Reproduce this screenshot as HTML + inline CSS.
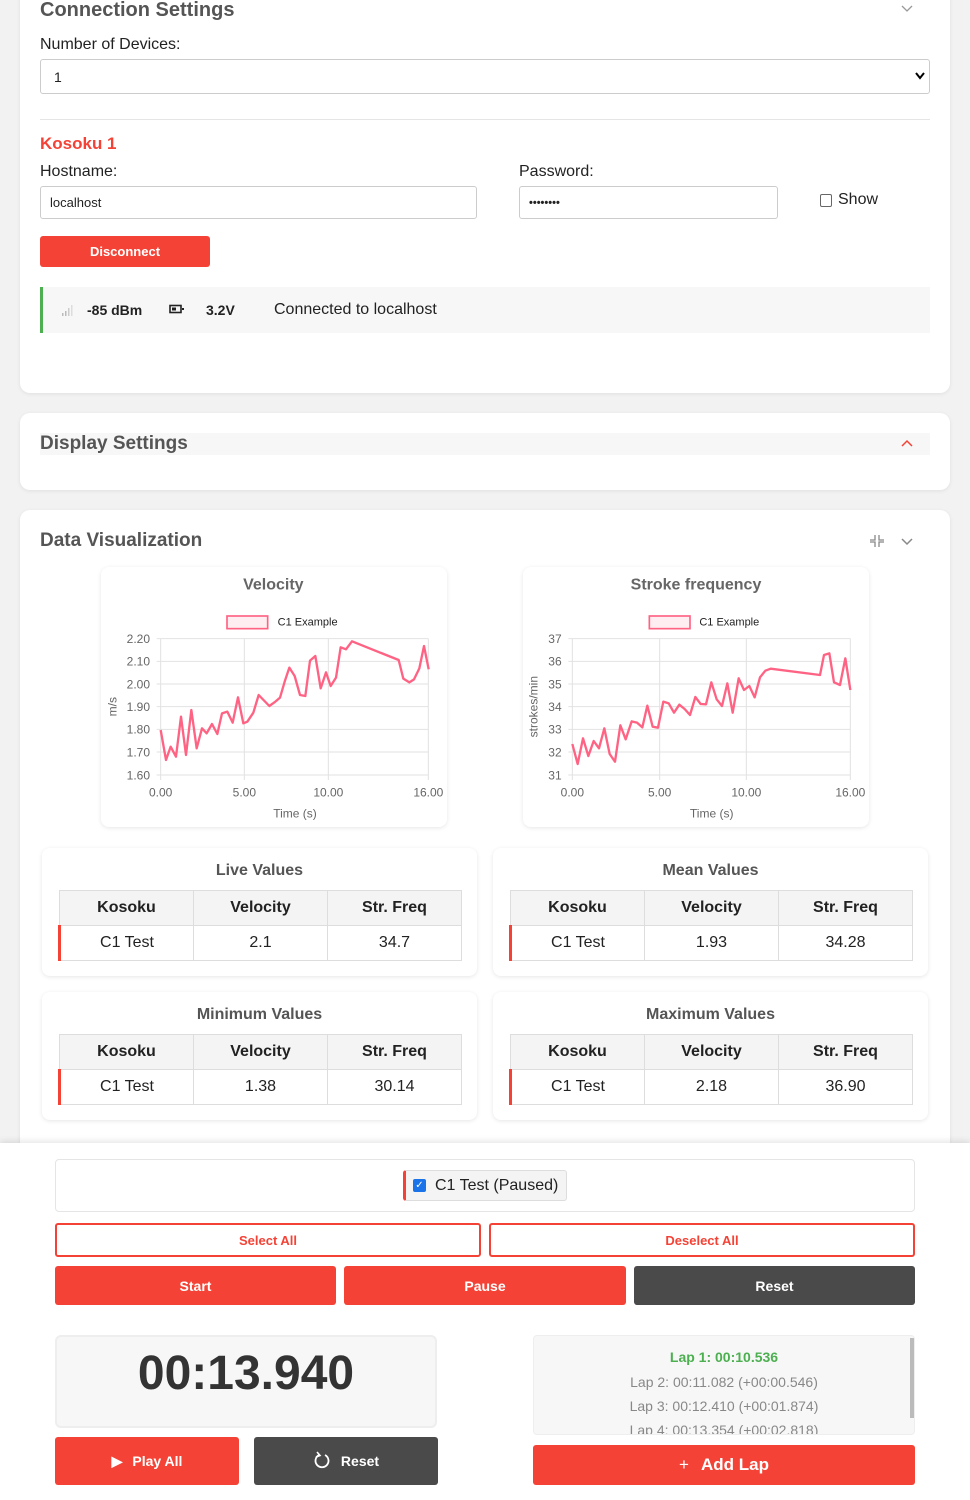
<!DOCTYPE html>
<html><head><meta charset="utf-8"><style>
*{box-sizing:border-box;margin:0;padding:0}
body{width:970px;height:1500px;background:#f2f2f2;font-family:"Liberation Sans",Arial,sans-serif;position:relative;overflow:hidden;color:#222}
.abs{position:absolute}
.card{position:absolute;background:#fff;border-radius:10px;box-shadow:0 1px 4px rgba(0,0,0,.08)}
.h2{position:absolute;font-size:20px;font-weight:bold;color:#555}
.inp{position:absolute;border:1px solid #ccc;border-radius:3px;background:#fff;font-size:13px;padding-left:9px;display:flex;align-items:center}
.btn{position:absolute;border-radius:3px;color:#fff;font-weight:bold;font-size:14px;display:flex;align-items:center;justify-content:center}
.red{background:#f44336}.dark{background:#4a4a4a}
.sub{position:absolute;background:#fff;border-radius:8px;box-shadow:0 1px 4px rgba(0,0,0,.1)}
table{position:absolute;border-collapse:collapse;font-size:16px;table-layout:fixed}
td,th{border:1px solid #ddd;text-align:center;height:35px}
th{background:#f4f4f4;font-weight:bold}
.tt{position:absolute;width:100%;text-align:center;font-weight:bold;font-size:16px;color:#555}
svg text{font-family:"Liberation Sans",Arial,sans-serif}
</style></head><body>

<div class="card" style="left:20px;top:-20px;width:930px;height:413px"></div>
<div class="h2" style="left:40px;top:-1px">Connection Settings</div>
<svg class="abs" style="left:901px;top:4px" width="12" height="10"><path d="M1 2 L6 7 L11 2" stroke="#999" fill="none" stroke-width="1.3"/></svg>
<div class="abs" style="left:40px;top:36px;font-size:16px">Number of Devices:</div>
<div class="inp" style="left:40px;top:59px;width:890px;height:35px;font-size:14px;padding-left:13px">1</div>
<svg class="abs" style="left:915px;top:72px" width="10" height="8"><path d="M1 1 L5 6 L9 1" stroke="#000" fill="none" stroke-width="2"/></svg>
<div class="abs" style="left:40px;top:119px;width:890px;height:1px;background:#e5e5e5"></div>
<div class="abs" style="left:40px;top:134px;font-size:17px;font-weight:bold;color:#f44336">Kosoku 1</div>
<div class="abs" style="left:40px;top:163px;font-size:16px">Hostname:</div>
<div class="abs" style="left:519px;top:163px;font-size:16px">Password:</div>
<div class="inp" style="left:40px;top:186px;width:437px;height:33px">localhost</div>
<div class="inp" style="left:519px;top:186px;width:259px;height:33px;font-size:11px;font-weight:bold">••••••••</div>
<div class="abs" style="left:820px;top:194px;width:12px;height:13px;border:1px solid #666;border-radius:2px"></div>
<div class="abs" style="left:838px;top:191px;font-size:16px">Show</div>
<div class="btn red" style="left:40px;top:236px;width:170px;height:31px;font-size:13px">Disconnect</div>
<div class="abs" style="left:40px;top:287px;width:890px;height:46px;background:#f7f7f7;border-left:3px solid #4caf50"></div>
<svg class="abs" style="left:61px;top:303px" width="14" height="14"><rect x="1" y="10" width="1.5" height="3" fill="#bbb"/><rect x="4" y="8" width="1.5" height="5" fill="#bbb"/><rect x="7" y="5" width="1.5" height="8" fill="#ccc"/><rect x="10" y="2" width="1.5" height="11" fill="#ddd"/></svg>
<div class="abs" style="left:87px;top:302px;font-size:14px;font-weight:bold">-85 dBm</div>
<svg class="abs" style="left:169px;top:304px" width="16" height="10"><rect x="1" y="1.5" width="11" height="7" fill="none" stroke="#222" stroke-width="1.6"/><rect x="3" y="3.5" width="4" height="3" fill="#222"/><rect x="13" y="4" width="2" height="2" fill="#222"/></svg>
<div class="abs" style="left:206px;top:302px;font-size:14px;font-weight:bold">3.2V</div>
<div class="abs" style="left:274px;top:301px;font-size:16px">Connected to localhost</div>

<div class="card" style="left:20px;top:413px;width:930px;height:77px"></div>
<div class="abs" style="left:40px;top:433px;width:890px;height:22px;background:#f7f7f7"></div>
<div class="h2" style="left:40px;top:433px;font-size:19px">Display Settings</div>
<svg class="abs" style="left:901px;top:439px" width="12" height="9"><path d="M1 7 L6 2 L11 7" stroke="#f44336" fill="none" stroke-width="1.5"/></svg>

<div class="card" style="left:20px;top:510px;width:930px;height:660px"></div>
<div class="h2" style="left:40px;top:530px;font-size:19px">Data Visualization</div>
<svg class="abs" style="left:870px;top:535px" width="14" height="12"><path d="M5 0V5H0M9 0V5H14M5 12V7H0M9 12V7H14" stroke="#888" fill="none" stroke-width="1.3"/></svg>
<svg class="abs" style="left:901px;top:537px" width="12" height="9"><path d="M1 2 L6 7 L11 2" stroke="#888" fill="none" stroke-width="1.5"/></svg>

<div class="sub" style="left:101px;top:567px;width:346px;height:260px"></div>
<svg class="abs" style="left:90px;top:560px" width="380" height="270" viewBox="0 0 1140 810">
<text x="550" y="88" font-size="48" font-weight="bold" fill="#666" text-anchor="middle">Velocity</text>
<rect x="411" y="168" width="122" height="38" fill="#ffeef1" stroke="#ff6384" stroke-width="5"/>
<text x="563" y="197" font-size="33" fill="#222" font-family="DejaVu Sans">C1 Example</text>
<g stroke="#e2e2e2" stroke-width="3"><path d="M200 236H1015M200 304H1015M200 372H1015M200 440H1015M200 508H1015M200 576H1015M200 645H1015M212 236V660M463 236V660M715 236V660M1015 236V660"/></g>
<g font-size="36" fill="#666" text-anchor="end"><text x="180" y="249">2.20</text><text x="180" y="317">2.10</text><text x="180" y="385">2.00</text><text x="180" y="453">1.90</text><text x="180" y="521">1.80</text><text x="180" y="589">1.70</text><text x="180" y="658">1.60</text></g>
<g font-size="36" fill="#666" text-anchor="middle"><text x="212" y="710">0.00</text><text x="463" y="710">5.00</text><text x="715" y="710">10.00</text><text x="1015" y="710">16.00</text><text x="615" y="772">Time (s)</text></g>
<text transform="translate(80 440) rotate(-90)" font-size="36" fill="#666" text-anchor="middle">m/s</text>
<polyline fill="none" stroke="#ff6384" stroke-width="7" stroke-linejoin="round" points="212,510 228,600 242,560 258,590 273,470 288,585 304,450 320,565 336,505 350,520 366,492 382,522 396,460 412,455 428,488 444,412 460,490 472,485 490,458 506,405 538,438 556,425 570,413 584,365 598,323 614,348 630,405 646,408 660,302 676,288 692,385 708,337 722,378 738,353 752,262 768,268 786,244 926,300 940,356 958,367 972,358 988,325 1002,258 1016,328"/>
</svg>

<div class="sub" style="left:523px;top:567px;width:346px;height:260px"></div>
<svg class="abs" style="left:510px;top:560px" width="380" height="270" viewBox="0 0 1140 810">
<text x="558" y="88" font-size="48" font-weight="bold" fill="#666" text-anchor="middle">Stroke frequency</text>
<rect x="418" y="168" width="122" height="38" fill="#ffeef1" stroke="#ff6384" stroke-width="5"/>
<text x="568" y="197" font-size="33" fill="#222" font-family="DejaVu Sans">C1 Example</text>
<g stroke="#e2e2e2" stroke-width="3"><path d="M175 236H1021M175 304H1021M175 372H1021M175 440H1021M175 508H1021M175 576H1021M175 645H1021M187 236V660M449 236V660M709 236V660M1021 236V660"/></g>
<g font-size="36" fill="#666" text-anchor="end"><text x="155" y="249">37</text><text x="155" y="317">36</text><text x="155" y="385">35</text><text x="155" y="453">34</text><text x="155" y="521">33</text><text x="155" y="589">32</text><text x="155" y="658">31</text></g>
<g font-size="36" fill="#666" text-anchor="middle"><text x="187" y="710">0.00</text><text x="449" y="710">5.00</text><text x="709" y="710">10.00</text><text x="1021" y="710">16.00</text><text x="605" y="772">Time (s)</text></g>
<text transform="translate(82 440) rotate(-90)" font-size="36" fill="#666" text-anchor="middle">strokes/min</text>
<polyline fill="none" stroke="#ff6384" stroke-width="7" stroke-linejoin="round" points="187,552 203,612 219,535 235,588 251,543 267,565 283,505 299,582 315,605 331,496 347,538 365,484 381,488 397,502 412,437 428,500 444,503 460,425 476,430 492,458 508,434 524,447 540,465 556,411 572,432 588,433 604,367 620,418 636,438 652,370 668,458 686,355 702,390 718,378 734,412 750,352 766,332 782,326 930,345 942,285 958,280 972,367 990,375 1006,295 1021,390"/>
</svg>

<div class="sub" style="left:42px;top:848px;width:435px;height:128px"><div class="tt" style="top:14px">Live Values</div>
<table style="left:16px;top:42px;width:404px"><tr><th>Kosoku</th><th>Velocity</th><th>Str. Freq</th></tr><tr><td style="border-left:3px solid #f44336">C1 Test</td><td>2.1</td><td>34.7</td></tr></table></div>
<div class="sub" style="left:493px;top:848px;width:435px;height:128px"><div class="tt" style="top:14px">Mean Values</div>
<table style="left:16px;top:42px;width:404px"><tr><th>Kosoku</th><th>Velocity</th><th>Str. Freq</th></tr><tr><td style="border-left:3px solid #f44336">C1 Test</td><td>1.93</td><td>34.28</td></tr></table></div>
<div class="sub" style="left:42px;top:992px;width:435px;height:128px"><div class="tt" style="top:14px">Minimum Values</div>
<table style="left:16px;top:42px;width:404px"><tr><th>Kosoku</th><th>Velocity</th><th>Str. Freq</th></tr><tr><td style="border-left:3px solid #f44336">C1 Test</td><td>1.38</td><td>30.14</td></tr></table></div>
<div class="sub" style="left:493px;top:992px;width:435px;height:128px"><div class="tt" style="top:14px">Maximum Values</div>
<table style="left:16px;top:42px;width:404px"><tr><th>Kosoku</th><th>Velocity</th><th>Str. Freq</th></tr><tr><td style="border-left:3px solid #f44336">C1 Test</td><td>2.18</td><td>36.90</td></tr></table></div>

<div class="abs" style="left:0;top:1143px;width:970px;height:357px;background:#fff;box-shadow:0 -2px 6px rgba(0,0,0,.1)"></div>
<div class="abs" style="left:55px;top:1159px;width:860px;height:53px;border:1px solid #e5e5e5;border-radius:4px"></div>
<div class="abs" style="left:403px;top:1170px;width:164px;height:31px;background:#f4f4f4;border:1px solid #ddd;border-left:3px solid #f44336;border-radius:3px"></div>
<div class="abs" style="left:413px;top:1179px;width:13px;height:13px;background:#1a73e8;border-radius:2px;color:#fff;font-size:10px;line-height:13px;text-align:center">✓</div>
<div class="abs" style="left:435px;top:1177px;font-size:16px">C1 Test (Paused)</div>
<div class="btn" style="left:55px;top:1223px;width:426px;height:34px;border:2px solid #f44336;color:#f44336;font-size:13px">Select All</div>
<div class="btn" style="left:489px;top:1223px;width:426px;height:34px;border:2px solid #f44336;color:#f44336;font-size:13px">Deselect All</div>
<div class="btn red" style="left:55px;top:1266px;width:281px;height:39px">Start</div>
<div class="btn red" style="left:344px;top:1266px;width:282px;height:39px">Pause</div>
<div class="btn dark" style="left:634px;top:1266px;width:281px;height:39px">Reset</div>

<div class="abs" style="left:55px;top:1335px;width:382px;height:93px;background:#f7f7f7;border:2px solid #eee;border-radius:6px;font-size:48px;font-weight:bold;color:#333;text-align:center;line-height:74px">00:13.940</div>
<div class="btn red" style="left:55px;top:1437px;width:184px;height:48px"><span style="font-size:14px;margin-right:10px">▶</span>Play All</div>
<div class="btn dark" style="left:254px;top:1437px;width:184px;height:48px"><svg width="18" height="20" style="margin-right:10px"><path d="M6 4 A6.5 6.5 0 1 0 12 4" stroke="#fff" fill="none" stroke-width="1.8"/><path d="M4 1 L7 4.5 L3 6" stroke="#fff" fill="none" stroke-width="1.6"/></svg>Reset</div>

<div class="abs" style="left:533px;top:1335px;width:382px;height:100px;background:#f7f7f7;border:1px solid #eee;border-radius:4px;overflow:hidden;text-align:center;font-size:14px;color:#888">
<div style="position:absolute;right:0;top:2px;width:4px;height:80px;background:#bbb"></div>
<div style="margin-top:13px;color:#4caf50;font-weight:bold">Lap 1: 00:10.536</div>
<div style="margin-top:9px">Lap 2: 00:11.082 (+00:00.546)</div>
<div style="margin-top:8px">Lap 3: 00:12.410 (+00:01.874)</div>
<div style="margin-top:8px">Lap 4: 00:13.354 (+00:02.818)</div>
</div>
<div class="btn red" style="left:533px;top:1445px;width:382px;height:40px;font-size:17px"><span style="margin-right:12px;font-weight:normal">+</span>Add Lap</div>
</body></html>
